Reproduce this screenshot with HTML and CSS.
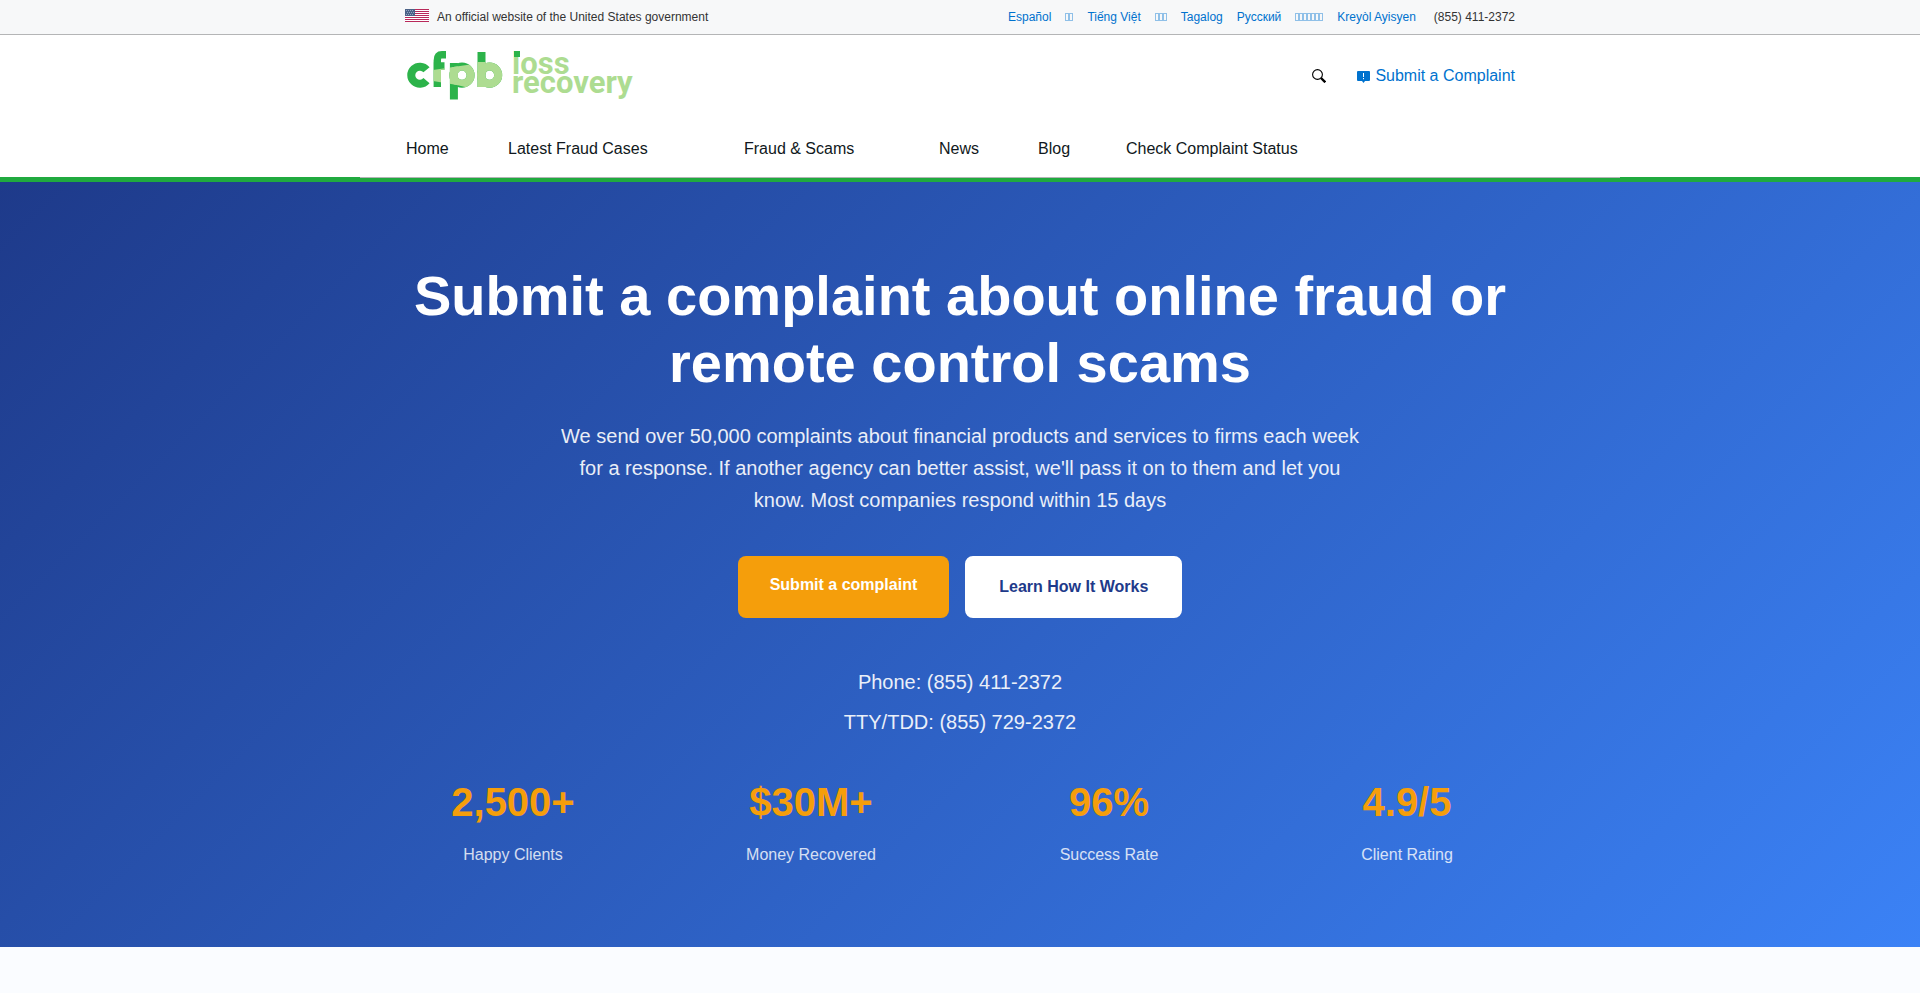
FILE: index.html
```html
<!DOCTYPE html>
<html lang="en">
<head>
<meta charset="utf-8">
<title>CFPB Loss Recovery</title>
<link rel="stylesheet" href="styles.css">
</head>
<body>
<div class="topbar">
  <div class="wrap topbar-row">
    <div class="official">
      <svg class="flag" viewBox="0 0 24 13" aria-hidden="true">
        <path fill="#fff" d="M0 0h24v13H0z"/>
        <path stroke="#b8295a" d="M0 .5h24M0 2.5h24M0 4.5h24M0 6.5h24M0 8.5h24M0 10.5h24M0 12.5h24"/>
        <path fill="#4c6388" d="M0 0h10v7H0z"/>
        <path stroke="#a9b8cf" stroke-width=".8" stroke-dasharray="1 1" d="M1 1.5h8M2 3.5h8M1 5.5h8"/>
      </svg>
      <span>An official website of the United States government</span>
    </div>
    <nav class="langs" aria-label="Languages">
      <a href="#">Español</a>
      <a href="#" lang="zh" class="boxes"><i></i><i></i></a>
      <a href="#">Tiếng Việt</a>
      <a href="#" lang="ko" class="boxes"><i></i><i></i><i></i></a>
      <a href="#">Tagalog</a>
      <a href="#">Русский</a>
      <a href="#" lang="ar" class="boxes"><i></i><i></i><i></i><i></i><i></i><i></i><i></i></a>
      <a href="#">Kreyòl Ayisyen</a>
      <span class="phone">(855) 411-2372</span>
    </nav>
  </div>
</div>
<header class="header">
  <div class="header-inner">
    <div class="brand-row">
      <a href="#" class="logo">
        <svg class="logo-art" viewBox="0 0 234 50">
          <defs>
            <g id="marks" fill="none" stroke-width="8">
              <path d="M21.500 18.800A8.600 8.500 0 1 0 21.500 29.600"/>
              <path stroke-width="7.400" d="M32.300 36V9.500Q32.300 3.700 37 3.700H41M28.500 15H39.500"/>
              <path d="M48.900 12V48.500"/><circle cx="57" cy="24.200" r="8.600"/>
              <path d="M76.500 1V36"/><circle cx="84.600" cy="24.200" r="8.600"/>
            </g>
            <clipPath id="band"><path d="M28 19 72 12.500V11H100V38H68L52 34 28 30z"/></clipPath>
          </defs>
          <use href="#marks" stroke="#2cb34a"/>
          <use href="#marks" stroke="#addc91" clip-path="url(#band)"/>
          <text class="logo-text" x="107" y="23">loss</text>
          <text class="logo-text" x="107" y="42">recovery</text>
          <path fill="#2cb34a" d="M109 0h6v6h-6z"/>
        </svg>
      </a>
      <div class="actions">
        <button class="search" aria-label="Search">
          <svg viewBox="0 0 14 14"><circle cx="5.500" cy="5.500" r="4.900" fill="none" stroke="#000" stroke-width="1.100"/><path d="m9 9 4.300 4.300" stroke="#000" stroke-width="2.400"/></svg>
        </button>
        <a href="#" class="submit-link">
          <svg class="bubble" viewBox="0 0 13 12"><path fill="#0072ce" d="M1 0h11a1 1 0 0 1 1 1v8a1 1 0 0 1-1 1H8l-1.500 2L5 10H1a1 1 0 0 1-1-1V1a1 1 0 0 1 1-1z"/><path stroke="#fff" d="M6.500 2v4M6.500 7v1.200"/></svg>
          <span>Submit a Complaint</span>
        </a>
      </div>
    </div>
    <nav class="mainnav" aria-label="Main">
      <a href="#">Home</a>
      <a href="#">Latest Fraud Cases</a>
      <a href="#">Fraud &amp; Scams</a>
      <a href="#">News</a>
      <a href="#">Blog</a>
      <a href="#">Check Complaint Status</a>
    </nav>
  </div>
</header>
<main>
  <section class="hero">
    <div class="hero-inner">
      <h1>Submit a complaint about online fraud or remote control scams</h1>
      <p class="lead">We send over 50,000 complaints about financial products and services to firms each week for a response. If another agency can better assist, we'll pass it on to them and let you know. Most companies respond within 15 days</p>
      <div class="cta">
        <a href="#" class="btn btn-primary">Submit a complaint</a>
        <a href="#" class="btn btn-secondary">Learn How It Works</a>
      </div>
      <div class="contact">
        <p>Phone: (855) 411-2372</p>
        <p>TTY/TDD: (855) 729-2372</p>
      </div>
      <div class="stats">
        <div><div class="value">2,500+</div><div class="label">Happy Clients</div></div>
        <div><div class="value">$30M+</div><div class="label">Money Recovered</div></div>
        <div><div class="value">96%</div><div class="label">Success Rate</div></div>
        <div><div class="value">4.9/5</div><div class="label">Client Rating</div></div>
      </div>
    </div>
  </section>
</main>
</body>
</html>
```
FILE: styles.css
```css
* { box-sizing: border-box; }
body {
  margin: 0;
  min-height: 100vh;
  background: #fafcff;
  font-family: "Liberation Sans", Arial, sans-serif;
  font-size: 16px;
  color: #101820;
}
a { color: inherit; text-decoration: none; }
p, h1 { margin: 0; }

.topbar {
  background: #f7f8f9;
  border-bottom: 1px solid #b4b5b6;
  font-size: 12px;
  line-height: 34px;
}
.wrap { max-width: 1110px; margin: 0 auto; }
.topbar-row { display: flex; justify-content: space-between; }
.official { display: flex; gap: 8px; color: #333; }
.flag { width: 24px; height: 13px; margin-top: 9px; }
.langs { display: flex; gap: 14px; color: #0072ce; }
.boxes { display: flex; padding-top: 13px; }
.boxes i { width: 4px; height: 8px; border: 1px solid #8fc0e8; }
.phone { color: #333; margin-left: 4px; }

.header { background: #fff; border-bottom: 4px solid #20aa3f; box-shadow: inset 0 -1px #20aa3f; }
.header-inner {
  max-width: 1260px;
  margin: 0 auto;
  padding: 0 75px;
}
.brand-row { display: flex; justify-content: space-between; align-items: flex-start; padding-top: 16px; }
.logo, .logo-art { display: block; }
.logo-art { width: 234px; height: 50px; overflow: visible; }
.logo-text { font: bold 31px Roboto, sans-serif; fill: #addc91; }
.actions { display: flex; align-items: center; gap: 31px; height: 50px; }
.search { border: 0; padding: 0; background: none; width: 14px; height: 14px; }
.search svg { display: block; }
.submit-link { display: flex; align-items: center; gap: 5px; color: #0072ce; }
.bubble { width: 13px; height: 12px; margin-top: 1px; }
/* The rule under the menu runs wider than the menu itself */
.mainnav {
  display: grid;
  grid-template-columns: 102px 236px 195px 99px 88px auto;
  margin: 0 -105px 0 -45px;
  padding: 35px 0 15px 46px;
  line-height: 26px;
  background: #fff;
  border-bottom: 1px solid #b4b5b6;
}

.hero {
  background: linear-gradient(135deg, #1e3a8a 0%, #3b82f6 100%);
  color: #fff;
  padding: 80px 0;
  text-align: center;
}
.hero-inner { max-width: 1200px; margin: 0 auto; padding: 0 20px; }
.hero h1 { font-size: 56px; line-height: 67px; margin-bottom: 24px; }
.lead { max-width: 800px; margin: 0 auto 40px; font-size: 20px; line-height: 32px; opacity: .9; }
.cta { display: flex; justify-content: center; gap: 16px; margin-bottom: 48px; }
.btn { padding: 16px 32px; border-radius: 8px; font-weight: bold; line-height: 26px; }
.btn-primary { background: #f59e0b; color: #fff; }
.btn-secondary { background: #fff; color: #1e3a8a; border: 2px solid #fff; }
.contact { font-size: 20px; line-height: 32px; opacity: .9; }
.contact p { margin-bottom: 8px; }
.stats { display: grid; grid-template-columns: repeat(4, 1fr); gap: 32px; margin-top: 32px; }
.value { font-size: 40px; font-weight: bold; line-height: 64px; color: #f59e0b; margin-bottom: 8px; }
.label { line-height: 25px; opacity: .8; }
```
